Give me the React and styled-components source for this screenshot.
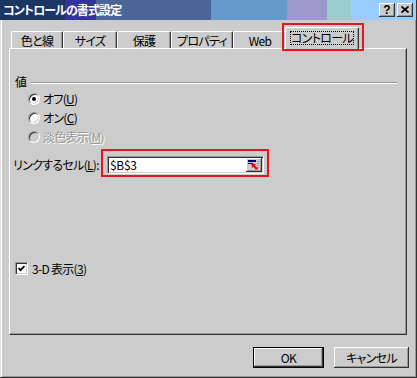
import React from "react";
import styled, { createGlobalStyle } from "styled-components";

const Global = createGlobalStyle`
  html, body { margin: 0; padding: 0; background: #cccccc; }
  body {
    font-family: "Noto Sans CJK JP", "Noto Sans", sans-serif;
    font-size: 12px;
    font-feature-settings: "palt";
    letter-spacing: -0.7px;
    color: #000;
  }
`;

const Window = styled.div`
  width: 417px;
  height: 378px;
  box-sizing: border-box;
  background: #cccccc;
  display: flex;
  flex-direction: column;
  border-right: 1px solid #333;
  border-bottom: 1px solid #333;
  overflow: hidden;
`;

const TitleBar = styled.div`
  height: 20px;
  flex: none;
  display: flex;
  align-items: center;
  padding: 0 3px 0 3px;
  gap: 2px;
  background: linear-gradient(
    to right,
    #1c3663 0 65px,
    #333399 65px 96px,
    #4a6699 96px 211px,
    #6699cc 211px 287px,
    #9999cc 287px 327px,
    #99cccc 327px 351px,
    #99ccff 351px
  );
`;

const Caption = styled.div`
  flex: 1;
  color: #fff;
  font-weight: bold;
  font-size: 12px;
  letter-spacing: -0.9px;
  line-height: 20px;
  white-space: nowrap;
`;

const CaptionButton = styled.div`
  width: 16px;
  height: 14px;
  box-sizing: border-box;
  background: #cccccc;
  box-shadow: inset -1px -1px #333, inset 1px 1px #fff, inset -2px -2px #999;
  display: flex;
  align-items: center;
  justify-content: center;
  font-family: "Liberation Sans", sans-serif;
  font-weight: bold;
  font-size: 12px;
  letter-spacing: 0;
  line-height: 12px;
  padding-bottom: 1px;
`;

const Body = styled.div`
  flex: 1;
  display: flex;
  flex-direction: column;
  padding: 0 9px 9px 9px;
  box-shadow: inset 1px 0 #e0e0e0, inset 2px 0 #fff, inset -1px -1px #999;
`;

const TabStrip = styled.div`
  height: 28px;
  flex: none;
  display: flex;
  align-items: flex-end;
  padding-left: 2px;
  position: relative;
  z-index: 2;
`;

const Tab = styled.div`
  position: relative;
  width: ${(p) => (p.$active ? p.$w + 4 : p.$w)}px;
  height: ${(p) => (p.$active ? 22 : 17)}px;
  margin: ${(p) => (p.$active ? "0 -2px -1px -2px" : "0")};
  box-sizing: border-box;
  background: #cccccc;
  border-top: 1px solid #fff;
  border-left: 1px solid #fff;
  border-right: 1px solid #333;
  box-shadow: inset -1px 0 #999;
  border-radius: 2px 2px 0 0;
  display: flex;
  align-items: center;
  justify-content: center;
  line-height: 13px;
  padding-bottom: ${(p) => (p.$active ? 2 : 0)}px;
  white-space: nowrap;
  z-index: ${(p) => (p.$active ? 3 : 1)};
`;

const FocusRing = styled.span`
  width: 64px;
  height: 14px;
  box-sizing: border-box;
  border: 1px dotted #000;
  display: flex;
  align-items: center;
  justify-content: center;
`;

const RedMark = styled.div`
  position: absolute;
  box-sizing: border-box;
  border: 2px solid #e4161e;
  left: ${(p) => p.$l}px;
  top: ${(p) => p.$t}px;
  width: ${(p) => p.$w}px;
  height: ${(p) => p.$h}px;
  pointer-events: none;
`;

const Panel = styled.div`
  flex: 1;
  box-sizing: border-box;
  border-top: 1px solid #fff;
  border-left: 1px solid #fff;
  border-right: 1px solid #333;
  border-bottom: 1px solid #333;
  box-shadow: inset -1px -1px #999;
  display: flex;
  flex-direction: column;
  padding-top: 26px;
  position: relative;
  z-index: 1;
`;

const GroupHeader = styled.div`
  display: flex;
  align-items: center;
  height: 14px;
  margin: 0 9px 0 5px;
  line-height: 14px;
`;

const GroupLine = styled.div`
  flex: 1;
  margin: 2px 0 0 5px;
  border-top: 1px solid #999;
  border-bottom: 1px solid #fff;
`;

const RadioList = styled.div`
  display: flex;
  flex-direction: column;
  margin-left: 18px;
`;

const RadioRow = styled.div`
  height: 19px;
  display: flex;
  align-items: center;
  gap: 3px;
  line-height: 14px;
`;

const RadioCircle = styled.span`
  position: relative;
  width: 12px;
  height: 12px;
  box-sizing: border-box;
  border-radius: 50%;
  border: 1px solid;
  border-color: #999 #fff #fff #999;
  background: ${(p) => (p.$disabled ? "#cccccc" : "#fff")};
  box-shadow: inset 1px 1px #333, inset -1px -1px #ccc;
  &::after {
    content: "";
    display: ${(p) => (p.$checked ? "block" : "none")};
    position: absolute;
    left: 3px;
    top: 3px;
    width: 4px;
    height: 4px;
    border-radius: 50%;
    background: #000;
  }
`;

const Label = styled.span`
  color: ${(p) => (p.$disabled ? "#999" : "#000")};
  text-shadow: ${(p) => (p.$disabled ? "1px 1px #fff" : "none")};
  white-space: nowrap;
`;

const Key = styled.span`
  text-decoration: underline;
`;

const LinkRow = styled.div`
  height: 18px;
  margin: 10px 0 0 3px;
  display: flex;
  align-items: center;
  line-height: 14px;
`;

const LinkLabel = styled.span`
  width: 94px;
  flex: none;
  white-space: nowrap;
`;

const RefInput = styled.div`
  position: relative;
  width: 157px;
  height: 18px;
  box-sizing: border-box;
  background: #fff;
  border: 1px solid;
  border-color: #999 #fff #fff #999;
  box-shadow: inset 1px 1px #333, inset -1px -1px #ccc;
  display: flex;
  align-items: center;
  padding: 1px 1px 1px 2px;
`;

const RefValue = styled.span`
  flex: 1;
  line-height: 14px;
  letter-spacing: -0.3px;
`;

const RefButton = styled.div`
  width: 16px;
  height: 14px;
  box-sizing: border-box;
  background: #cccccc;
  box-shadow: inset -1px -1px #333, inset 1px 1px #fff, inset -2px -2px #999;
  display: flex;
  align-items: center;
  justify-content: center;
`;

const CheckRow = styled.div`
  height: 13px;
  margin: 88px 0 0 5px;
  display: flex;
  align-items: center;
  gap: 4px;
  line-height: 14px;
`;

const CheckBox = styled.span`
  width: 13px;
  height: 13px;
  box-sizing: border-box;
  background: #fff;
  border: 1px solid;
  border-color: #999 #fff #fff #999;
  box-shadow: inset 1px 1px #333, inset -1px -1px #ccc;
  display: flex;
  align-items: center;
  justify-content: center;
`;

const ButtonRow = styled.div`
  height: 21px;
  flex: none;
  margin: 12px -2px 0 0;
  display: flex;
  justify-content: flex-end;
  gap: 10px;
`;

const PushButton = styled.div`
  width: ${(p) => p.$w}px;
  height: 21px;
  box-sizing: border-box;
  background: #cccccc;
  border: ${(p) => (p.$default ? "1px solid #000" : "none")};
  box-shadow: inset -1px -1px #333, inset 1px 1px #fff, inset -2px -2px #999;
  display: flex;
  align-items: center;
  justify-content: center;
  line-height: 14px;
  white-space: nowrap;
`;

const tabs = [
  { label: "色と線", w: 52 },
  { label: "サイズ", w: 54 },
  { label: "保護", w: 54 },
  { label: "プロパティ", w: 62 },
  { label: "Web", w: 54 },
  { label: "コントロール", w: 70, active: true },
];

const radios = [
  { text: "オフ", key: "U", checked: true },
  { text: "オン", key: "C" },
  { text: "淡色表示", key: "M", disabled: true },
];

export default function App() {
  return (
    <>
      <Global />
      <Window>
        <TitleBar>
          <Caption>コントロールの書式設定</Caption>
          <CaptionButton>?</CaptionButton>
          <CaptionButton>
            <svg width="8" height="7" viewBox="0 0 8 7">
              <path d="M0.5 0.5 L7.5 6.5 M7.5 0.5 L0.5 6.5" stroke="#000" strokeWidth="1.8" />
            </svg>
          </CaptionButton>
        </TitleBar>
        <Body>
          <TabStrip>
            {tabs.map((t) => (
              <Tab key={t.label} $w={t.w} $active={t.active}>
                {t.active ? (
                  <>
                    <FocusRing>{t.label}</FocusRing>
                    <RedMark $l={-4} $t={-5} $w={82} $h={28} />
                  </>
                ) : (
                  t.label
                )}
              </Tab>
            ))}
          </TabStrip>
          <Panel>
            <GroupHeader>
              値
              <GroupLine />
            </GroupHeader>
            <RadioList>
              {radios.map((r) => (
                <RadioRow key={r.key}>
                  <RadioCircle $checked={r.checked} $disabled={r.disabled} />
                  <Label $disabled={r.disabled}>
                    {r.text}(<Key>{r.key}</Key>)
                  </Label>
                </RadioRow>
              ))}
            </RadioList>
            <LinkRow>
              <LinkLabel>
                リンクするセル(<Key>L</Key>):
              </LinkLabel>
              <RefInput>
                <RefValue>$B$3</RefValue>
                <RefButton>
                  <svg width="12" height="10" viewBox="0 0 12 10">
                    <rect x="0" y="0" width="8" height="2" fill="#000066" />
                    <rect x="0" y="3" width="5" height="1" fill="#000066" />
                    <path d="M10 1 V9 M7 9 H11" stroke="#666" strokeWidth="1" strokeDasharray="1 1" />
                    <path d="M4 4 L9 9" stroke="#e00" strokeWidth="2" />
                    <path d="M3.5 3.5 L8 4 L4 8 Z" fill="#e00" />
                  </svg>
                </RefButton>
                <RedMark $l={-7} $t={-8} $w={168} $h={28} />
              </RefInput>
            </LinkRow>
            <CheckRow>
              <CheckBox>
                <svg width="7" height="7" viewBox="0 0 7 7">
                  <path d="M0.5 3 L2.5 5.2 L6.5 1" stroke="#000" strokeWidth="1.8" fill="none" />
                </svg>
              </CheckBox>
              <Label>
                3-D 表示(<Key>3</Key>)
              </Label>
            </CheckRow>
          </Panel>
          <ButtonRow>
            <PushButton $w={71} $default>
              OK
            </PushButton>
            <PushButton $w={75}>キャンセル</PushButton>
          </ButtonRow>
        </Body>
      </Window>
    </>
  );
}
